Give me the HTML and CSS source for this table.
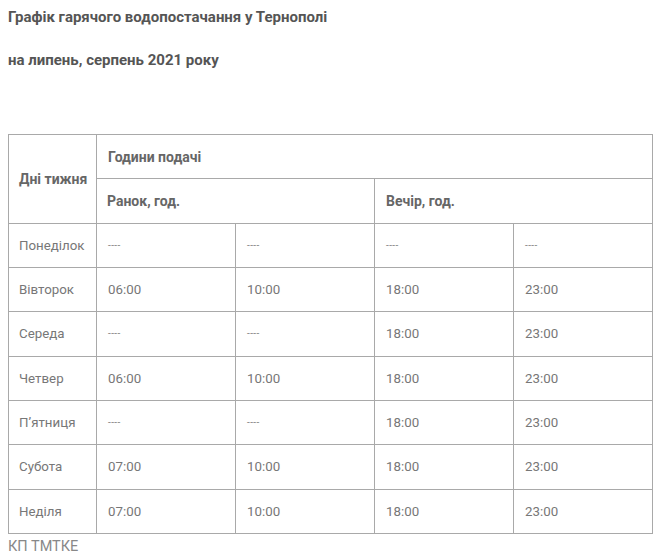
FILE: index.html
```html
<!DOCTYPE html>
<html lang="uk">
<head>
<meta charset="utf-8">
<link rel="stylesheet" href="styles.css">
</head>
<body>
<div class="page">
  <p class="title">Графік гарячого водопостачання у Тернополі</p>
  <p class="title second">на липень, серпень 2021 року</p>
  <table class="schedule">
    <colgroup>
      <col class="c-day">
      <col class="c-t"><col class="c-t"><col class="c-t"><col class="c-t">
    </colgroup>
    <tr>
      <th rowspan="2">Дні тижня</th>
      <th colspan="4">Години подачі</th>
    </tr>
    <tr>
      <th colspan="2">Ранок, год.</th>
      <th colspan="2">Вечір, год.</th>
    </tr>
    <tr><td>Понеділок</td><td class="dash">----</td><td class="dash">----</td><td class="dash">----</td><td class="dash">----</td></tr>
    <tr><td>Вівторок</td><td>06:00</td><td>10:00</td><td>18:00</td><td>23:00</td></tr>
    <tr><td>Середа</td><td class="dash">----</td><td class="dash">----</td><td>18:00</td><td>23:00</td></tr>
    <tr><td>Четвер</td><td>06:00</td><td>10:00</td><td>18:00</td><td>23:00</td></tr>
    <tr><td>П’ятниця</td><td class="dash">----</td><td class="dash">----</td><td>18:00</td><td>23:00</td></tr>
    <tr><td>Субота</td><td>07:00</td><td>10:00</td><td>18:00</td><td>23:00</td></tr>
    <tr><td>Неділя</td><td>07:00</td><td>10:00</td><td>18:00</td><td>23:00</td></tr>
  </table>
  <p class="source">КП ТМТКЕ</p>
</div>
</body>
</html>
```
FILE: styles.css
```css
html, body {
  margin: 0;
  padding: 0;
  background: #fff;
}
.page {
  padding: 7px 8px 0 8px;
  font-family: Roboto, "Liberation Sans", sans-serif;
  color: #777;
}
.title {
  margin: 0;
  font-size: 15px;
  line-height: 20px;
  font-weight: 700;
  font-stretch: 95%;
  color: #555;
}
.title.second {
  margin-top: 23px;
}
.schedule {
  margin-top: 64px;
  border-collapse: collapse;
  width: 645px;
  table-layout: fixed;
  font-size: 13.3px;
}
.c-day { width: 88px; }
.c-t { width: 139px; }
.schedule th,
.schedule td {
  border: 1px solid #a9a9a9;
  height: 44.33px;
  padding: 0 0 0 11px;
  text-align: left;
  vertical-align: middle;
  box-sizing: border-box;
}
.schedule th {
  font-size: 14px;
  font-weight: 700;
  font-stretch: 93%;
  color: #666;
}
.schedule td:first-child,
.schedule th:first-child {
  padding-left: 10px;
}
.schedule td.dash {
  font-size: 10px;
  letter-spacing: 0.4px;
  color: #888;
}
.source {
  margin: 3px 0 0 0;
  font-size: 14.5px;
  line-height: 20px;
  color: #888;
}
```
